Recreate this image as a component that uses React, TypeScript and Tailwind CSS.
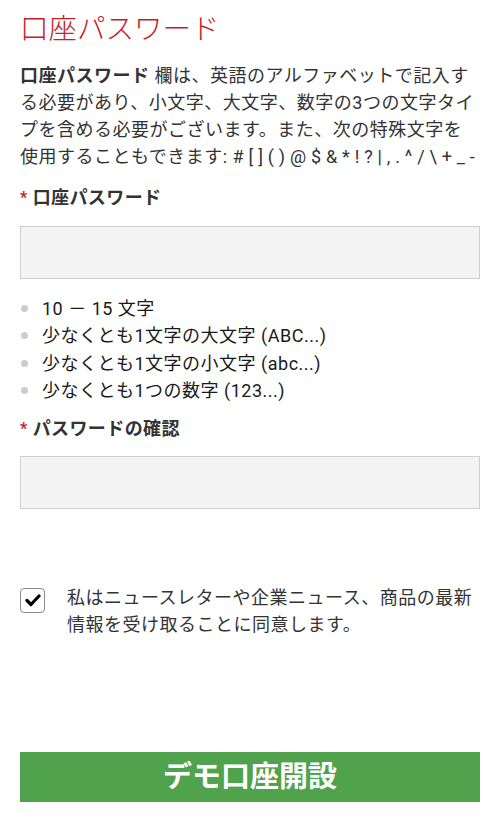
import React from "react";

const font = { fontFamily: 'Roboto, "Noto Sans CJK JP", sans-serif' };

function Label({ children }: { children: React.ReactNode }) {
  return (
    <div className="flex items-center text-[18px] leading-[27px] font-bold text-[#333] tracking-[0.4px]">
      <span className="text-[#c8201f] text-[16px] mr-[5px]">*</span>
      <span>{children}</span>
    </div>
  );
}

function Input() {
  return <div className="h-[53px] w-full border border-[#cfcfcf] bg-[#f4f4f4]" />;
}

export default function App() {
  const bullets = [
    "10 － 15 文字",
    "少なくとも1文字の大文字 (ABC...)",
    "少なくとも1文字の小文字 (abc...)",
    "少なくとも1つの数字 (123...)",
  ];
  return (
    <div className="w-[500px] h-[829px] bg-white px-[20px] pt-[12px]" style={font}>
      <h1 className="text-[28.5px] leading-[36px] font-light text-[#c8201f]">口座パスワード</h1>
      <p className="mt-[14px] text-[18px] leading-[27px] text-[#333] tracking-[0.5px]">
        <b className="font-bold">口座パスワード</b> 欄は、英語のアルファベットで記入する必要があり、小文字、大文字、数字の3つの文字タイプを含める必要がございます。また、次の特殊文字を使用することもできます:{" "}
        <span className="tracking-[0.2px] whitespace-nowrap">{"# [ ] ( ) @ $ & * ! ? | , . ^ / \\ + _ -"}</span>
      </p>
      <div className="mt-[14px]">
        <Label>口座パスワード</Label>
      </div>
      <div className="mt-[15px]">
        <Input />
      </div>
      <ul className="mt-[16px]">
        {bullets.map((b) => (
          <li key={b} className="flex items-center text-[18px] leading-[27.3px] text-[#1a1a1a] tracking-[0.5px]">
            <span className="w-[7px] h-[7px] rounded-full bg-[#cccccc] ml-[1px] mr-[14px]" />
            <span>{b}</span>
          </li>
        ))}
      </ul>
      <div className="mt-[11px]">
        <Label>パスワードの確認</Label>
      </div>
      <div className="mt-[14px]">
        <Input />
      </div>
      <div className="mt-[75px] flex items-start">
        <div className="mt-[4px] w-[25px] h-[25px] shrink-0 rounded-[4px] border border-[#8a8a8a] bg-white flex items-center justify-center">
          <svg width="16" height="13" viewBox="0 0 16 13">
            <path d="M2 6.5 L6 10.5 L14 2" fill="none" stroke="#000" strokeWidth="3.2" strokeLinecap="round" strokeLinejoin="round" />
          </svg>
        </div>
        <p className="ml-[22px] text-[18px] leading-[27px] text-[#333] tracking-[0.5px]">
          私はニュースレターや企業ニュース、商品の最新情報を受け取ることに同意します。
        </p>
      </div>
      <button className="mt-[114px] w-full h-[50px] bg-[#50a24d] text-white text-[29px] font-bold flex items-center justify-center leading-none">
        デモ口座開設
      </button>
    </div>
  );
}
